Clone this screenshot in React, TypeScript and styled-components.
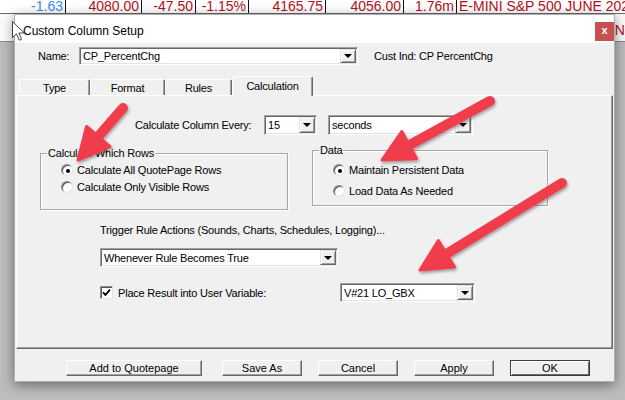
import React from "react";
import styled, { createGlobalStyle } from "styled-components";

const Global = createGlobalStyle`
  html, body { margin: 0; padding: 0; }
  body { font-family: "Liberation Sans", Arial, sans-serif; }
  * { box-sizing: border-box; }
`;

const Page = styled.div`
  position: relative;
  width: 625px;
  height: 400px;
  overflow: hidden;
  background: #bdbdbd;
`;

const QuoteRow = styled.div`
  display: grid;
  grid-template-columns: 66px 76px 54px 53px 77px 78px 53px 1fr;
  height: 14px;
  background: #fff;
  border-bottom: 1px solid #6a6a6a;
  font-size: 14px;
  line-height: 12px;
  white-space: nowrap;
`;

const QuoteCell = styled.div<{ $blue?: boolean; $left?: boolean; $last?: boolean }>`
  color: ${(p) => (p.$blue ? "#3a8cf0" : "#b3101c")};
  text-align: ${(p) => (p.$left ? "left" : "right")};
  padding: ${(p) => (p.$left ? "0 0 0 2px" : "0 2px 0 0")};
  border-right: ${(p) => (p.$last ? "none" : "1px solid #111")};
  overflow: hidden;
`;

const QuoteRow2 = styled.div`
  height: 28px;
  background: #fbfbfb;
  border-bottom: 1px solid #8c8c8c;
  padding: 5px 0 0 460px;
  font-size: 14px;
  line-height: 22px;
  color: #b3101c;
  white-space: nowrap;
  overflow: hidden;
`;

const Dialog = styled.div`
  position: absolute;
  left: 14px;
  top: 14px;
  width: 601px;
  height: 368px;
  background: #f0f0f0;
  border: 1px solid #b0b0b0;
  box-shadow: 0 3px 12px rgba(0, 0, 0, 0.45);
  display: flex;
  flex-direction: column;
  font-size: 11px;
  letter-spacing: -0.2px;
  color: #000;
`;

const TitleBar = styled.div`
  height: 28px;
  background: #fff;
  display: flex;
  align-items: flex-start;
`;

const TitleText = styled.div`
  margin: 9px 0 0 8px;
  font-size: 12px;
  line-height: 14px;
  letter-spacing: 0;
`;

const CloseButton = styled.div`
  margin: 7px 0 0 auto;
  width: 19px;
  height: 19px;
  background: #c75050;
  color: #fff;
  font-size: 11px;
  font-weight: bold;
  line-height: 17px;
  text-align: center;
  letter-spacing: 0;
`;

const NameRow = styled.div`
  margin-top: 4px;
  height: 18px;
  display: flex;
  align-items: center;
  padding-left: 23px;
`;

const Label = styled.div<{ $w?: number }>`
  width: ${(p) => (p.$w ? `${p.$w}px` : "auto")};
  flex: none;
  line-height: 14px;
  white-space: nowrap;
`;

const CustInd = styled.div`
  margin-left: 16px;
  line-height: 14px;
  white-space: nowrap;
`;

const Combo = styled.div<{ $w: number; $h: number }>`
  width: ${(p) => p.$w}px;
  height: ${(p) => p.$h}px;
  flex: none;
  background: #fff;
  border: 1px solid;
  border-color: #a0a0a0 #fff #fff #a0a0a0;
  box-shadow: inset 1px 1px 0 #696969, inset -1px -1px 0 #e3e3e3;
  display: flex;
  align-items: stretch;
  padding: 1px;
`;

const ComboText = styled.div`
  flex: 1;
  padding-left: 2px;
  display: flex;
  align-items: center;
  white-space: nowrap;
  overflow: hidden;
`;

const DropButton = styled.div`
  width: 16px;
  flex: none;
  background: #f0f0f0;
  border: 1px solid;
  border-color: #e3e3e3 #696969 #696969 #e3e3e3;
  box-shadow: inset 1px 1px 0 #fff, inset -1px -1px 0 #a0a0a0;
  display: flex;
  align-items: center;
  justify-content: center;
`;

const Triangle = styled.div`
  width: 0;
  height: 0;
  border-left: 4px solid transparent;
  border-right: 4px solid transparent;
  border-top: 4px solid #000;
`;

const TabRow = styled.div`
  margin-top: 11px;
  height: 19px;
  padding-left: 4px;
  display: flex;
  align-items: flex-end;
  position: relative;
  z-index: 1;
`;

const Tab = styled.div<{ $w: number; $active?: boolean }>`
  width: ${(p) => p.$w}px;
  height: ${(p) => (p.$active ? 20 : 16)}px;
  margin-bottom: ${(p) => (p.$active ? -1 : 0)}px;
  background: #f0f0f0;
  border-top: 1px solid #fff;
  border-left: 1px solid #fff;
  border-right: 1px solid #696969;
  box-shadow: inset -1px 0 0 #a0a0a0;
  border-radius: 2px 2px 0 0;
  display: flex;
  align-items: ${(p) => (p.$active ? "flex-start" : "center")};
  padding-top: ${(p) => (p.$active ? 2 : 0)}px;
  justify-content: center;
  line-height: 14px;
`;

const Panel = styled.div`
  margin: 0 1px;
  height: 254px;
  flex: none;
  border-top: 1px solid #fff;
  border-left: 1px solid #fff;
  border-right: 1px solid #696969;
  border-bottom: 1px solid #696969;
  box-shadow: inset -1px -1px 0 #a0a0a0;
  display: flex;
  flex-direction: column;
`;

const Row = styled.div<{ $mt: number; $pl?: number; $h?: number }>`
  margin-top: ${(p) => p.$mt}px;
  padding-left: ${(p) => p.$pl ?? 0}px;
  height: ${(p) => (p.$h ? `${p.$h}px` : "auto")};
  display: flex;
  align-items: center;
`;

const GroupRow = styled.div`
  margin-top: 15px;
  display: flex;
  align-items: flex-start;
`;

const GroupBox = styled.div<{ $w: number; $h: number; $ml: number; $mt: number; $pt: number; $pl: number; $gap: number }>`
  position: relative;
  width: ${(p) => p.$w}px;
  height: ${(p) => p.$h}px;
  margin-left: ${(p) => p.$ml}px;
  margin-top: ${(p) => p.$mt}px;
  padding: ${(p) => p.$pt}px 0 0 ${(p) => p.$pl}px;
  border: 1px solid #a6a6a6;
  box-shadow: 1px 1px 0 #fff, inset 1px 1px 0 #fff;
  display: flex;
  flex-direction: column;
  gap: ${(p) => p.$gap}px;
`;

const Legend = styled.div`
  position: absolute;
  top: -7px;
  left: 6px;
  padding: 0 1px;
  background: #f0f0f0;
  line-height: 13px;
`;

const RadioItem = styled.div`
  height: 14px;
  display: flex;
  align-items: center;
  gap: 4px;
  white-space: nowrap;
`;

const RadioCircle = styled.div<{ $on?: boolean }>`
  width: 12px;
  height: 12px;
  border-radius: 50%;
  background: #fff;
  border: 1px solid;
  border-color: #8a8a8a #e3e3e3 #e3e3e3 #8a8a8a;
  box-shadow: inset 1px 1px 0 #555;
  display: flex;
  align-items: center;
  justify-content: center;
  flex: none;
  &::after {
    content: "";
    display: ${(p) => (p.$on ? "block" : "none")};
    width: 4px;
    height: 4px;
    border-radius: 50%;
    background: #000;
    margin: 1px 0 0 1px;
  }
`;

const CheckItem = styled.div`
  width: 240px;
  flex: none;
  display: flex;
  align-items: center;
  gap: 5px;
  white-space: nowrap;
`;

const CheckBox = styled.div`
  width: 13px;
  height: 13px;
  background: #fff;
  border: 1px solid;
  border-color: #8a8a8a #e3e3e3 #e3e3e3 #8a8a8a;
  box-shadow: inset 1px 1px 0 #555;
  display: flex;
  align-items: center;
  justify-content: center;
  flex: none;
`;

const ButtonRow = styled.div`
  margin-top: 11px;
  height: 16px;
  padding-left: 51px;
  display: flex;
  gap: 16px;
`;

const Button = styled.div<{ $w: number; $default?: boolean }>`
  width: ${(p) => p.$w}px;
  height: 16px;
  background: #f0f0f0;
  border: 1px solid;
  border-color: ${(p) => (p.$default ? "#3c3c3c" : "#fff #696969 #696969 #fff")};
  box-shadow: ${(p) =>
    p.$default
      ? "inset 1px 1px 0 #fff, inset -1px -1px 0 #696969"
      : "inset -1px -1px 0 #a0a0a0"};
  display: flex;
  align-items: center;
  justify-content: center;
  letter-spacing: 0;
  line-height: 14px;
  white-space: nowrap;
`;

const Overlay = styled.svg`
  position: absolute;
  left: 0;
  top: 0;
  width: 625px;
  height: 400px;
  pointer-events: none;
`;

const Cursor = styled.svg`
  position: absolute;
  left: 12px;
  top: 21px;
  width: 14px;
  height: 21px;
`;

type Pt = [number, number];

function arrowParts(tail: Pt, tip: Pt) {
  const dx = tip[0] - tail[0];
  const dy = tip[1] - tail[1];
  const len = Math.hypot(dx, dy);
  const ux = dx / len;
  const uy = dy / len;
  const L = 31;
  const W = 15.5;
  const bx = tip[0] - ux * L;
  const by = tip[1] - uy * L;
  const nx = -uy;
  const ny = ux;
  return {
    shaft: `M${tail[0]} ${tail[1]} L${bx + ux * 4} ${by + uy * 4}`,
    head: `${tip[0]},${tip[1]} ${bx + nx * W},${by + ny * W} ${bx - nx * W},${by - ny * W}`,
  };
}

const arrows: [Pt, Pt][] = [
  [[123, 108], [78, 160]],
  [[490, 101], [382, 160]],
  [[562, 183], [420, 270]],
];

function ComboBox({ w, h, text }: { w: number; h: number; text: string }) {
  return (
    <Combo $w={w} $h={h}>
      <ComboText>{text}</ComboText>
      <DropButton>
        <Triangle />
      </DropButton>
    </Combo>
  );
}

export default function App() {
  return (
    <Page>
      <Global />
      <QuoteRow>
        <QuoteCell $blue>-1.63</QuoteCell>
        <QuoteCell>4080.00</QuoteCell>
        <QuoteCell>-47.50</QuoteCell>
        <QuoteCell>-1.15%</QuoteCell>
        <QuoteCell>4165.75</QuoteCell>
        <QuoteCell>4056.00</QuoteCell>
        <QuoteCell>1.76m</QuoteCell>
        <QuoteCell $left $last>E-MINI S&amp;P 500 JUNE 2020</QuoteCell>
      </QuoteRow>
      <QuoteRow2>E-MINI NASDAQ 100 JUNE 2020</QuoteRow2>

      <Dialog>
        <TitleBar>
          <TitleText>Custom Column Setup</TitleText>
          <CloseButton>x</CloseButton>
        </TitleBar>

        <NameRow>
          <Label $w={41}>Name:</Label>
          <ComboBox w={279} h={18} text="CP_PercentChg" />
          <CustInd>Cust Ind: CP PercentChg</CustInd>
        </NameRow>

        <TabRow>
          <Tab $w={71}>Type</Tab>
          <Tab $w={75}>Format</Tab>
          <Tab $w={67}>Rules</Tab>
          <Tab $w={81} $active>
            Calculation
          </Tab>
        </TabRow>

        <Panel>
          <Row $mt={19} $pl={118} $h={20}>
            <Label $w={129}>Calculate Column Every:</Label>
            <ComboBox w={53} h={20} text="15" />
            <Row $mt={0} $pl={11} $h={20}>
              <ComboBox w={145} h={20} text="seconds" />
            </Row>
          </Row>

          <GroupRow>
            <GroupBox $w={248} $h={57} $ml={23} $mt={3} $pt={9} $pl={20} $gap={3}>
              <Legend>Calculate Which Rows</Legend>
              <RadioItem>
                <RadioCircle $on />
                Calculate All QuotePage Rows
              </RadioItem>
              <RadioItem>
                <RadioCircle />
                Calculate Only Visible Rows
              </RadioItem>
            </GroupBox>
            <GroupBox $w={236} $h={56} $ml={24} $mt={0} $pt={12} $pl={20} $gap={7}>
              <Legend>Data</Legend>
              <RadioItem>
                <RadioCircle $on />
                Maintain Persistent Data
              </RadioItem>
              <RadioItem>
                <RadioCircle />
                Load Data As Needed
              </RadioItem>
            </GroupBox>
          </GroupRow>

          <Row $mt={13} $pl={83} $h={14}>
            <Label>Trigger Rule Actions (Sounds, Charts, Schedules, Logging)...</Label>
          </Row>

          <Row $mt={11} $pl={83} $h={19}>
            <ComboBox w={238} h={19} text="Whenever Rule Becomes True" />
          </Row>

          <Row $mt={16} $pl={83} $h={19}>
            <CheckItem>
              <CheckBox>
                <svg width="9" height="9" viewBox="0 0 9 9">
                  <path d="M1 4.3 L3.4 6.8 L8 1.6" fill="none" stroke="#000" strokeWidth="1.8" />
                </svg>
              </CheckBox>
              Place Result into User Variable:
            </CheckItem>
            <ComboBox w={135} h={19} text="V#21  LO_GBX" />
          </Row>
        </Panel>

        <ButtonRow>
          <Button $w={136} style={{ marginRight: 4 }}>Add to Quotepage</Button>
          <Button $w={80}>Save As</Button>
          <Button $w={80}>Cancel</Button>
          <Button $w={80}>Apply</Button>
          <Button $w={80} $default>
            OK
          </Button>
        </ButtonRow>
      </Dialog>

      <Overlay viewBox="0 0 625 400">
        <defs>
          <filter id="shadow" x="-20%" y="-20%" width="140%" height="140%">
            <feDropShadow dx="1" dy="2" stdDeviation="1.6" floodColor="#000" floodOpacity="0.35" />
          </filter>
        </defs>
        {arrows.map(([tail, tip], i) => {
          const a = arrowParts(tail, tip);
          return (
            <g key={i} filter="url(#shadow)" fill="#f03e4b" stroke="#f03e4b">
              <path d={a.shaft} strokeWidth={10} strokeLinecap="round" fill="none" />
              <polygon points={a.head} strokeWidth={3} strokeLinejoin="round" />
            </g>
          );
        })}
      </Overlay>

      <Cursor viewBox="0 0 14 21">
        <polygon
          points="0.5,0.5 0.5,16.5 4.4,12.8 7.2,19.2 9.6,18.2 6.9,12 12.2,12"
          fill="#fff"
          stroke="#333"
          strokeWidth="0.9"
          strokeLinejoin="round"
        />
      </Cursor>
    </Page>
  );
}
